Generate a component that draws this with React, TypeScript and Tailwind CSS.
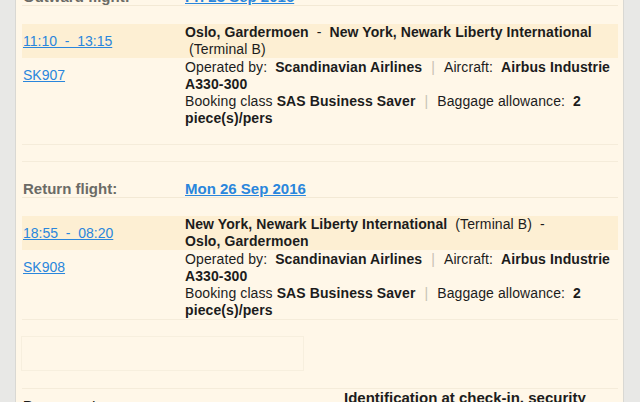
import React from 'react';

type Segment = {
  time: string;
  flight: string;
  route: React.ReactNode;
};

const Sep = () => <span className="mx-[9px] text-[#c8c2b4]">|</span>;

const Details = ({ flight }: { flight: string }) => (
  <div className="flex">
    <div className="w-[163px] shrink-0 pl-[1px] pt-[9px]">
      <a href="#" className="text-[#2a86dc] underline">{flight}</a>
    </div>
    <div className="flex-1 pr-[4px] pt-[1px] tracking-[0.1px]">
      <div>
        Operated by:&nbsp; <b>Scandinavian Airlines</b>
        <Sep />
        Aircraft:&nbsp; <b>Airbus Industrie A330-300</b>
      </div>
      <div>
        Booking class <b>SAS Business Saver</b>
        <Sep />
        Baggage allowance:&nbsp; <b>2 piece(s)/pers</b>
      </div>
    </div>
  </div>
);

const FlightSegment = ({ seg }: { seg: Segment }) => (
  <>
    <div className="flex bg-[#fdefd3]">
      <div className="w-[163px] shrink-0 pl-[1px] flex items-center">
        <a href="#" className="text-[#2a86dc] underline whitespace-pre">{seg.time}</a>
      </div>
      <div className="flex-1 pr-[4px] min-h-[34px] tracking-[0.1px]">{seg.route}</div>
    </div>
    <Details flight={seg.flight} />
  </>
);

const DayRow = ({ label, date }: { label: string; date: string }) => (
  <div className="flex items-end h-[36px] border-b border-[#f3e9d5] text-[15px] font-bold">
    <div className="w-[163px] shrink-0 pl-[1px] text-[#6b6b66]">{label}</div>
    <a href="#" className="text-[#2a86dc] underline">{date}</a>
  </div>
);

export default function App() {
  const outward: Segment = {
    time: '11:10  -  13:15',
    flight: 'SK907',
    route: (
      <>
        <b className="whitespace-nowrap">Oslo, Gardermoen</b>&nbsp; - &nbsp;
        <b className="whitespace-nowrap">New York, Newark Liberty International</b>{' '}
        <span className="whitespace-nowrap">{'\u00a0(Terminal B)'}</span>
      </>
    ),
  };
  const inbound: Segment = {
    time: '18:55  -  08:20',
    flight: 'SK908',
    route: (
      <>
        <b className="whitespace-nowrap">New York, Newark Liberty International</b>&nbsp;{' '}
        <span className="whitespace-nowrap">(Terminal B)&nbsp; -</span>{' '}
        <b className="whitespace-nowrap">Oslo, Gardermoen</b>
      </>
    ),
  };

  return (
    <div className="flex h-[402px] overflow-hidden bg-[#e8e8e6] font-['Liberation_Sans',Arial,sans-serif] text-[14px] leading-[17px] text-[#1c1c1c]">
      <div className="w-[16px] shrink-0 border-r border-[#d9d8d3]" />
      <div className="flex-1 bg-[#fff7e8] pl-[6px] pr-[5px]">
        <div className="-mt-[30px]">
          <DayRow label="Outward flight:" date="Fri 23 Sep 2016" />
          <div className="h-[18px]" />
          <FlightSegment seg={outward} />
          <div className="h-[18px] border-b border-[#f5ecda]" />
          <div className="h-[17px] border-b border-[#f5ecda]" />
          <DayRow label="Return flight:" date="Mon 26 Sep 2016" />
          <div className="h-[18px]" />
          <FlightSegment seg={inbound} />
          <div className="h-[1px] bg-[#f5ecda]" />
          <div className="h-[16px]" />
          <div className="h-[35px] w-[283px] -ml-[1px] border border-[#f7efde]" />
          <div className="h-[18px] border-b border-[#f5ecda]" />
          <div className="flex font-bold text-[15px]">
            <div className="w-[322px] shrink-0 pl-[1px] pt-[8px]">Documents</div>
            <div>Identification at check-in, security</div>
          </div>
        </div>
      </div>
      <div className="w-[17px] shrink-0 border-l border-[#d9d8d3]" />
    </div>
  );
}
